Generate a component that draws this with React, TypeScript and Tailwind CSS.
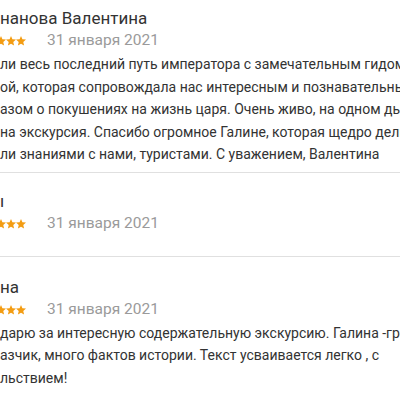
import React from 'react';

type Review = {
  name: string;
  lines: string[];
  stars: number;
  pad: string;
};

const reviews: Review[] = [
  {
    name: 'нанова Валентина',
    stars: 5,
    pad: 'pt-[15px] pb-[6px]',
    lines: [
      'ли весь последний путь императора с замечательным гидом',
      'ой, которая сопровождала нас интересным и познавательным',
      'азом о покушениях на жизнь царя. Очень живо, на одном дыхании',
      'на экскурсия. Спасибо огромное Галине, которая щедро делилась',
      'ли знаниями с нами, туристами. С уважением, Валентина',
    ],
  },
  {
    name: 'ı',
    stars: 5,
    pad: 'pt-[16px] pb-[21px]',
    lines: [],
  },
  {
    name: 'на',
    stars: 5,
    pad: 'pt-[18px] pb-[8px]',
    lines: [
      'дарю за интересную содержательную экскурсию. Галина -гроза',
      'азчик, много фактов истории. Текст усваивается легко , с',
      'льствием!',
    ],
  },
];

const Star = () => (
  <svg viewBox="0 0 24 24" className="w-[12px] h-[12px] shrink-0 -mr-[2px]" fill="#f39c12">
    <path d="M12 17.27L18.18 21l-1.64-7.03L22 9.24l-7.19-.61L12 2 9.19 8.63 2 9.24l5.46 4.73L5.82 21z" />
  </svg>
);

const ReviewItem = ({ review }: { review: Review }) => (
  <div className={`border-b border-[#e0e0e0] ${review.pad}`}>
    <div className="h-[24px] leading-[24px] text-[17px] text-[#333] whitespace-nowrap">{review.name}</div>
    <div className="flex items-center h-[22px]">
      <div className="flex items-center -ml-[25px] w-[72px]">
        {Array.from({ length: review.stars }).map((_, i) => (
          <Star key={i} />
        ))}
      </div>
      <span className="text-[15.5px] text-[#9a9a9a]">31 января 2021</span>
    </div>
    {review.lines.length > 0 && (
      <div className="mt-[1px] text-[14px] leading-[22.5px] text-[#333]">
        {review.lines.map((l, i) => (
          <div key={i} className="whitespace-nowrap">{l}</div>
        ))}
      </div>
    )}
  </div>
);

export default function App() {
  return (
    <div className="w-[400px] h-[400px] overflow-hidden bg-white font-['Roboto',sans-serif] -mt-[9px]">
      {reviews.map((r, i) => (
        <ReviewItem key={i} review={r} />
      ))}
    </div>
  );
}
